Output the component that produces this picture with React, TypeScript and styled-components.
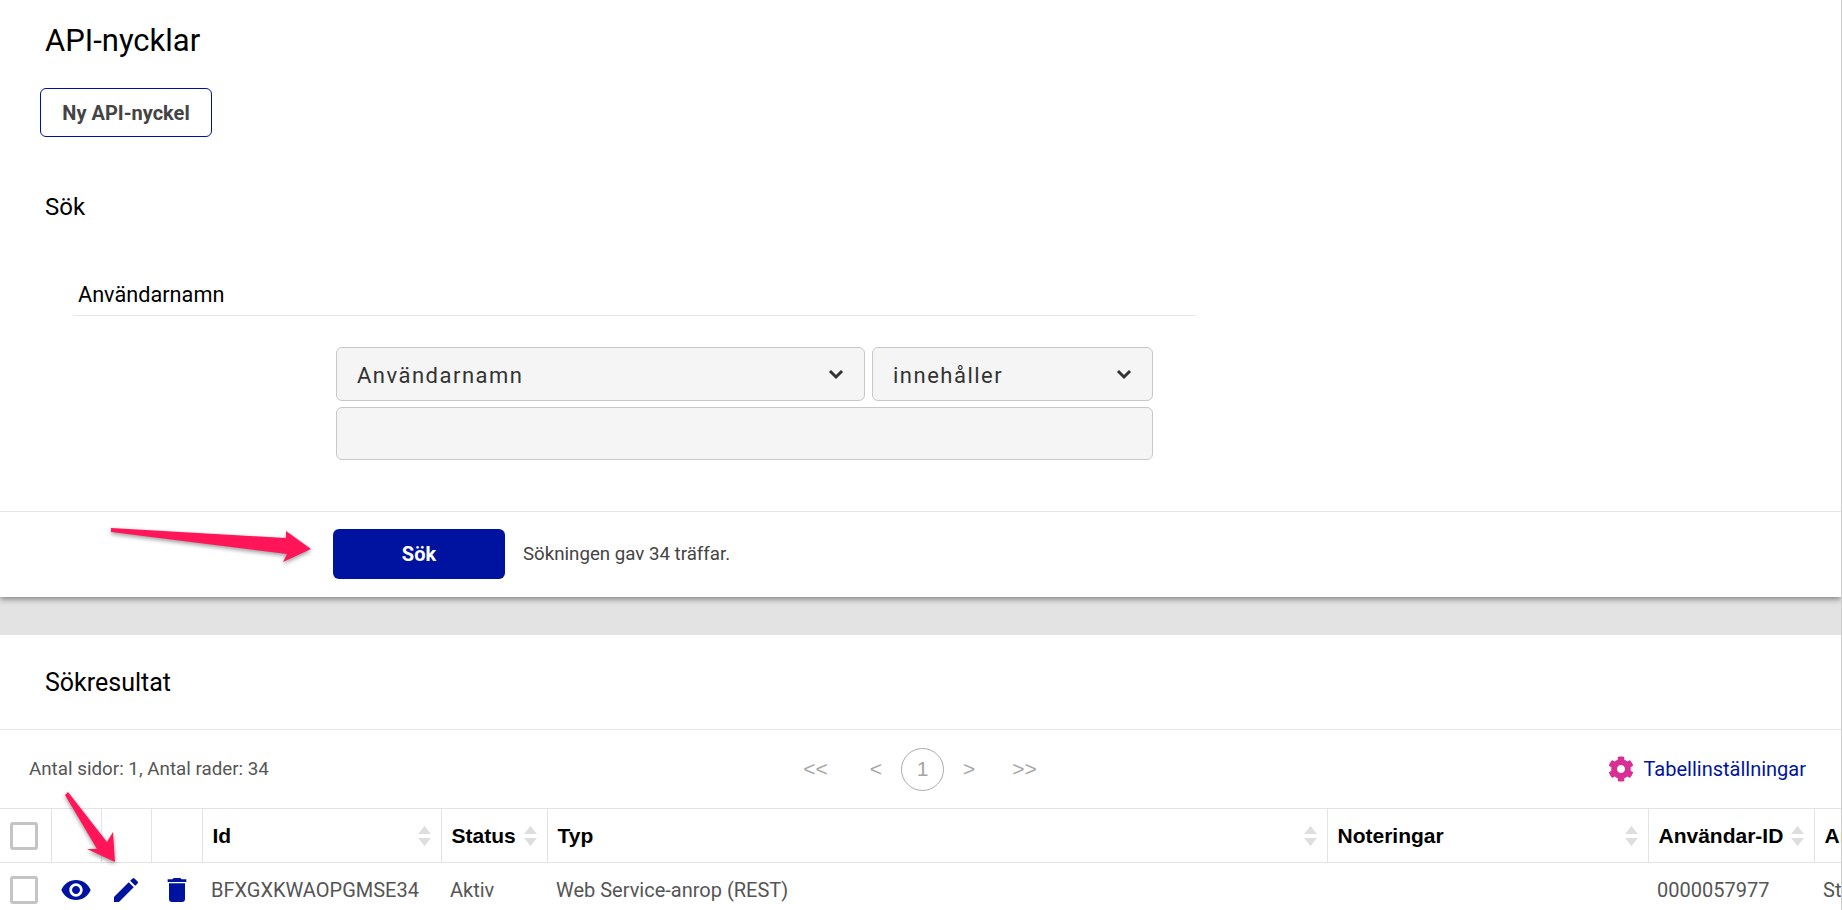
import React from 'react';
import styled, { createGlobalStyle } from 'styled-components';
import { FaCog } from 'react-icons/fa';
import { MdDelete, MdEdit, MdVisibility } from 'react-icons/md';

const GlobalStyle = createGlobalStyle`
  html, body {
    margin: 0;
    padding: 0;
    background: #fff;
  }
  body {
    font-family: 'Roboto', 'Liberation Sans', sans-serif;
    color: #000;
    overflow: hidden;
  }
  * {
    box-sizing: border-box;
  }
`;

const Page = styled.div`
  position: relative;
  width: 1842px;
  height: 910px;
  overflow: hidden;
  border-right: 1px solid #ccc;
`;

const SearchPanel = styled.section`
  position: relative;
  height: 597px;
  background: #fff;
  box-shadow: 0 2px 6px rgba(0, 0, 0, 0.45);
`;

const Title = styled.h1`
  margin: 0;
  padding: 23px 0 0 45px;
  height: 88px;
  font-size: 31px;
  line-height: 36px;
  font-weight: 400;
`;

const NewKeyButton = styled.button`
  display: block;
  margin-left: 40px;
  width: 172px;
  height: 49px;
  background: #fff;
  border: 1px solid #0013a0;
  border-radius: 6px;
  font-family: inherit;
  font-size: 20px;
  font-weight: 700;
  color: #444;
`;

const SectionTitle = styled.h2`
  margin: 55px 0 0 45px;
  font-size: 24px;
  line-height: 30px;
  font-weight: 400;
`;

const FieldHeader = styled.div`
  margin: 61px 0 0 73px;
  width: 1123px;
  height: 33px;
  padding: 0 5px;
  border-bottom: 1px solid #e6e6e6;
  font-size: 21.7px;
  line-height: 24px;
`;

const FilterForm = styled.div`
  margin: 31px 0 0 336px;
  width: 817px;
  display: flex;
  flex-direction: column;
  gap: 6px;
`;

const SelectRow = styled.div`
  display: flex;
  gap: 7px;
`;

const Select = styled.div<{ $width: number }>`
  width: ${(p) => p.$width}px;
  height: 54px;
  display: flex;
  align-items: center;
  justify-content: space-between;
  padding: 3px 20px 0;
  background: #f5f5f5;
  border: 1px solid #c8c8c8;
  border-radius: 6px;
  font-size: 22px;
  letter-spacing: 1.5px;
  color: #333;
  svg {
    margin-top: -3px;
  }
`;

const TextInput = styled.div`
  height: 53px;
  background: #f5f5f5;
  border: 1px solid #c8c8c8;
  border-radius: 6px;
`;

const Actions = styled.div`
  margin-top: 51px;
  height: 86px;
  padding: 17px 0 0 333px;
  border-top: 1px solid #e6e6e6;
  display: flex;
  align-items: flex-start;
`;

const SearchButton = styled.button`
  width: 172px;
  height: 50px;
  background: #0013a0;
  border: none;
  border-radius: 6px;
  font-family: inherit;
  font-size: 20px;
  font-weight: 700;
  color: #fff;
`;

const ResultCount = styled.span`
  margin-left: 18px;
  font-size: 18.7px;
  line-height: 50px;
  color: #444;
`;

const Band = styled.div`
  height: 38px;
  background: #e3e3e3;
`;

const ResultsHeader = styled.h2`
  margin: 0;
  height: 95px;
  padding-left: 45px;
  display: flex;
  align-items: center;
  border-bottom: 1px solid #e6e6e6;
  font-size: 25px;
  font-weight: 400;
`;

const Toolbar = styled.div`
  height: 78px;
  display: grid;
  grid-template-columns: 1fr auto 1fr;
  align-items: center;
  padding: 0 35px 0 29px;
`;

const PageInfo = styled.span`
  font-size: 18.8px;
  color: #555;
`;

const Pager = styled.div`
  display: flex;
  align-items: center;
  gap: 19px;
  padding-left: 5px;
  font-family: 'Liberation Sans', sans-serif;
  font-size: 21px;
  color: #a5a5a5;
`;

const PagerLink = styled.span<{ $jump?: 'first' | 'last' }>`
  margin-right: ${(p) => (p.$jump === 'first' ? 23 : 0)}px;
  margin-left: ${(p) => (p.$jump === 'last' ? 18 : 0)}px;
`;

const CurrentPage = styled.span`
  width: 43px;
  height: 43px;
  display: flex;
  align-items: center;
  justify-content: center;
  border: 1px solid #aaa;
  border-radius: 50%;
`;

const SettingsLink = styled.a`
  justify-self: end;
  display: flex;
  align-items: center;
  gap: 10px;
  font-size: 20px;
  color: #0013a0;
  svg {
    color: #d92f95;
    font-size: 26px;
  }
`;

const Table = styled.table`
  table-layout: fixed;
  border-collapse: collapse;
  width: 2014px;
`;

const HeadCell = styled.th`
  height: 54px;
  padding: 0 10px;
  border: 1px solid #e3e3e3;
  text-align: left;
  font-family: 'Liberation Sans', sans-serif;
  font-size: 21px;
  font-weight: 700;
  &:first-child {
    border-left: none;
    padding: 0;
  }
`;

const HeadLabel = styled.div`
  display: flex;
  align-items: center;
  justify-content: space-between;
  white-space: nowrap;
`;

const BodyCell = styled.td`
  height: 54px;
  padding: 1px 9px 0;
  vertical-align: middle;
  font-size: 20px;
  color: #555;
  white-space: nowrap;
  &:first-child {
    padding: 0;
  }
`;

const IconCell = styled(BodyCell)`
  padding: 0;
  color: #0013a0;
  text-align: center;
  svg {
    display: block;
    margin: 0 auto;
    font-size: 32px;
  }
`;

const Checkbox = styled.span`
  display: block;
  width: 28px;
  height: 28px;
  margin-left: 10px;
  border: 3px solid #c4c4c4;
  border-radius: 3px;
`;

const AnnotationLayer = styled.svg`
  position: absolute;
  inset: 0;
  pointer-events: none;
  filter: drop-shadow(0 2px 2px rgba(0, 0, 0, 0.4));
`;

const Chevron = () => (
  <svg width="16" height="11" viewBox="0 0 16 11" fill="none" stroke="#333" strokeWidth="3">
    <polyline points="2,2 8,8 14,2" />
  </svg>
);

const SortArrows = () => (
  <svg width="13" height="20" viewBox="0 0 13 20" fill="#dedede" style={{ flexShrink: 0 }}>
    <polygon points="6.5,0 13,8 0,8" />
    <polygon points="0,12 13,12 6.5,20" />
  </svg>
);

const columns = [
  { label: 'Id', width: 239 },
  { label: 'Status', width: 106 },
  { label: 'Typ', width: 780 },
  { label: 'Noteringar', width: 321 },
  { label: 'Användar-ID', width: 166 },
  { label: 'Användarnamn', width: 200 },
];

const App = () => (
  <Page>
    <GlobalStyle />
    <SearchPanel>
      <Title>API-nycklar</Title>
      <NewKeyButton>Ny API-nyckel</NewKeyButton>
      <SectionTitle>Sök</SectionTitle>
      <FieldHeader>Användarnamn</FieldHeader>
      <FilterForm>
        <SelectRow>
          <Select $width={529}>
            Användarnamn
            <Chevron />
          </Select>
          <Select $width={281}>
            innehåller
            <Chevron />
          </Select>
        </SelectRow>
        <TextInput />
      </FilterForm>
      <Actions>
        <SearchButton>Sök</SearchButton>
        <ResultCount>Sökningen gav 34 träffar.</ResultCount>
      </Actions>
    </SearchPanel>
    <Band />
    <ResultsHeader>Sökresultat</ResultsHeader>
    <Toolbar>
      <PageInfo>Antal sidor: 1, Antal rader: 34</PageInfo>
      <Pager>
        <PagerLink $jump="first">&lt;&lt;</PagerLink>
        <PagerLink>&lt;</PagerLink>
        <CurrentPage>1</CurrentPage>
        <PagerLink>&gt;</PagerLink>
        <PagerLink $jump="last">&gt;&gt;</PagerLink>
      </Pager>
      <SettingsLink>
        <FaCog />
        Tabellinställningar
      </SettingsLink>
    </Toolbar>
    <Table>
      <colgroup>
        <col width="51" />
        <col width="50" />
        <col width="50" />
        <col width="51" />
        {columns.map((c) => (
          <col key={c.label} width={c.width} />
        ))}
      </colgroup>
      <thead>
        <tr>
          <HeadCell>
            <Checkbox />
          </HeadCell>
          <HeadCell />
          <HeadCell />
          <HeadCell />
          {columns.map((c) => (
            <HeadCell key={c.label}>
              <HeadLabel>
                {c.label}
                <SortArrows />
              </HeadLabel>
            </HeadCell>
          ))}
        </tr>
      </thead>
      <tbody>
        <tr>
          <BodyCell>
            <Checkbox />
          </BodyCell>
          <IconCell>
            <MdVisibility />
          </IconCell>
          <IconCell>
            <MdEdit />
          </IconCell>
          <IconCell>
            <MdDelete />
          </IconCell>
          <BodyCell>BFXGXKWAOPGMSE34</BodyCell>
          <BodyCell>Aktiv</BodyCell>
          <BodyCell>Web Service-anrop (REST)</BodyCell>
          <BodyCell />
          <BodyCell>0000057977</BodyCell>
          <BodyCell>Standard</BodyCell>
        </tr>
      </tbody>
    </Table>
    <AnnotationLayer width="1842" height="910" viewBox="0 0 1842 910" fill="#ff1558">
      <polygon points="111,528 286,538 286,531 311,549 283,562 287,554 111,532" />
      <polygon points="65,795 68,792 107,842 113,832 115,862 87,849 97,849" />
    </AnnotationLayer>
  </Page>
);

export default App;
